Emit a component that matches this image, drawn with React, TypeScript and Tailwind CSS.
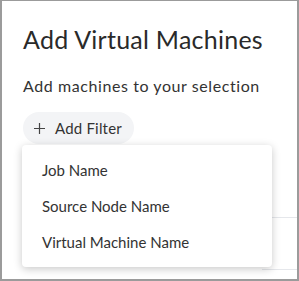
import React from "react";

export default function App() {
  const font = { fontFamily: 'Lato, "Noto Sans", sans-serif' };
  return (
    <div className="w-[299px] h-[281px] bg-[#9b9b9b] pl-[2px] pt-[1px] pr-[2px] pb-[2px]" style={font}>
      <div className="relative w-full h-full bg-white overflow-hidden">
        <div className="pl-[21px] pt-[23px] flex flex-col items-start">
          <h1 className="text-[25px] leading-[30px] tracking-[0.25px] text-[#2a2a2a]">Add Virtual Machines</h1>
          <p className="mt-[22px] text-[16px] leading-[20px] tracking-[0.58px] text-[#333]">Add machines to your selection</p>
          <button className="mt-[16px] h-[32px] w-[111px] pl-[11px] rounded-full bg-[#f3f4f6] flex items-center gap-[10px] text-[15px] tracking-[0.2px] text-[#333]">
            <svg width="11" height="11" viewBox="0 0 11 11" fill="none" stroke="#444" strokeWidth="1.2">
              <path d="M5.5 0v11M0 5.5h11" />
            </svg>
            Add Filter
          </button>
        </div>
        <div className="absolute left-[260px] right-0 top-[216px] border-t border-[#e5e7eb]" />
        <div className="absolute left-[260px] right-0 top-[268px] border-t border-[#e5e7eb]" />
        <div className="absolute left-[20px] top-[144px] w-[250px] rounded-[4px] bg-white shadow-[0_2px_8px_rgba(0,0,0,0.22)] py-[7px] flex flex-col">
          {["Job Name", "Source Node Name", "Virtual Machine Name"].map((t) => (
            <div key={t} className="h-[36px] flex items-center px-[20px] text-[15px] text-[#333]">
              {t}
            </div>
          ))}
        </div>
      </div>
    </div>
  );
}
